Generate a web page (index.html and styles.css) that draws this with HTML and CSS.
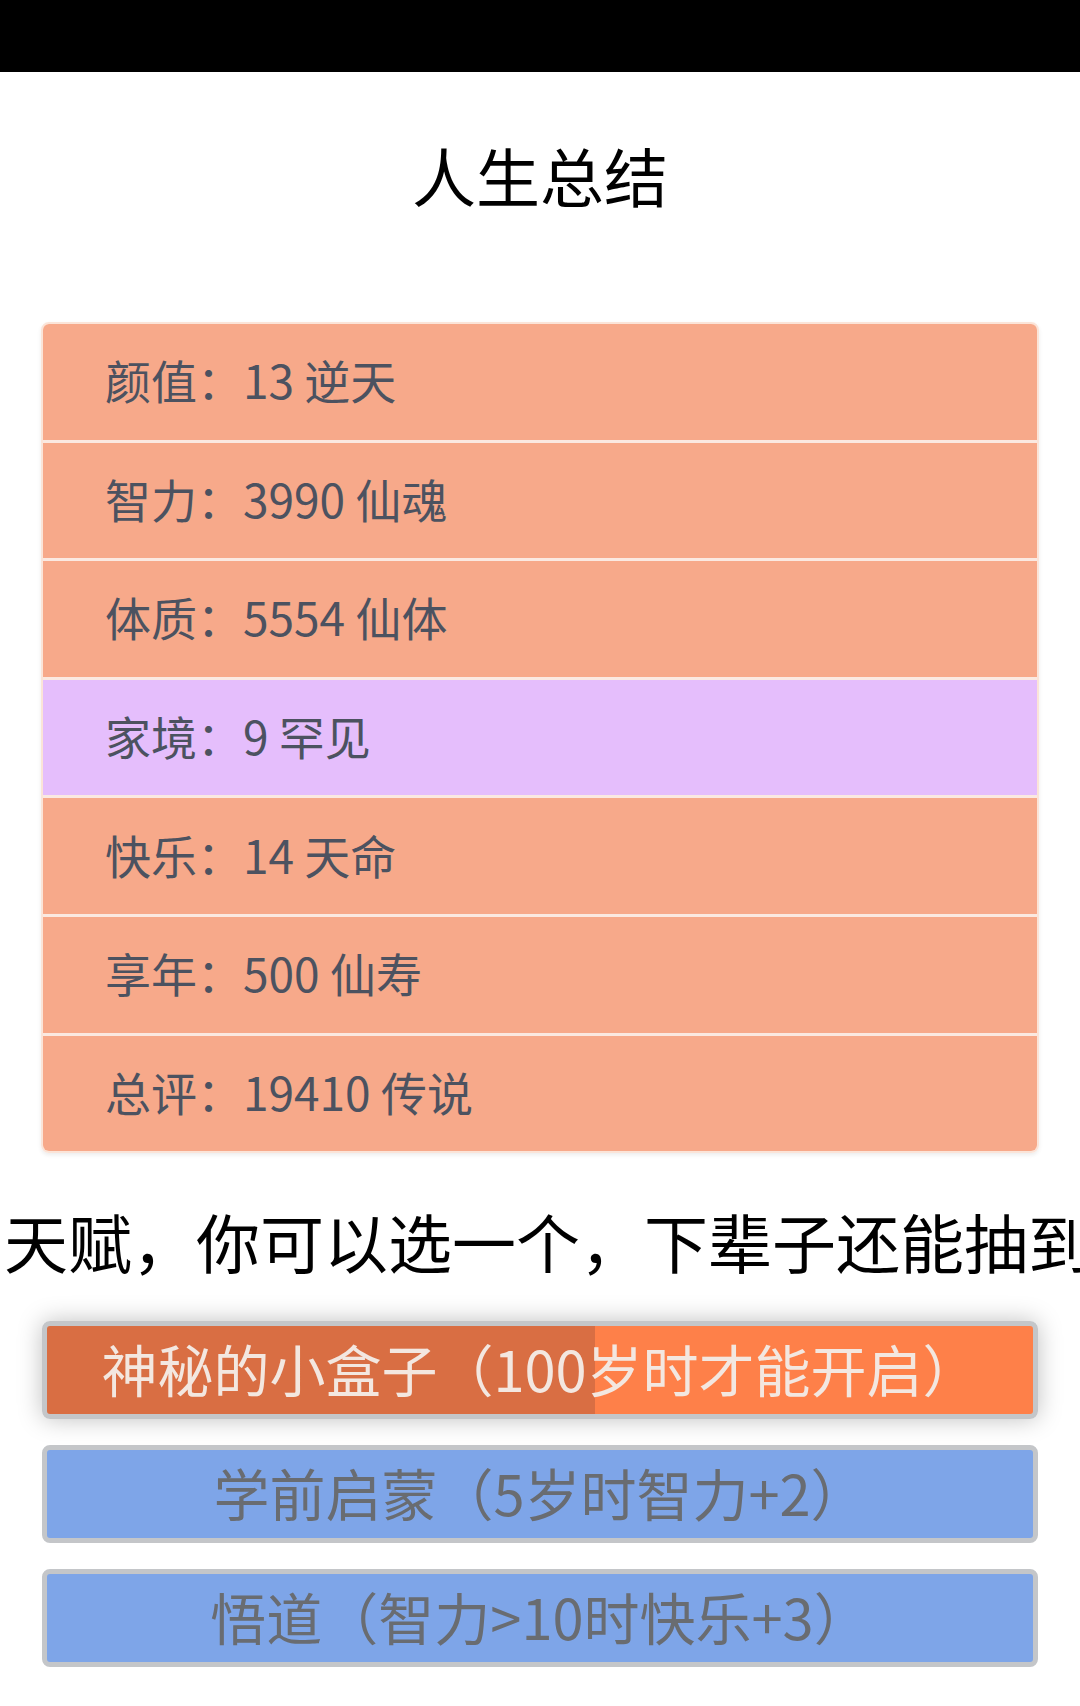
FILE: index.html
```html
<!DOCTYPE html>
<html lang="zh-CN">
<head>
  <meta charset="UTF-8">
  <title>人生总结</title>
  <link rel="stylesheet" href="styles.css">
</head>
<body>
  <div class="topbar"></div>

  <div class="page">
    <h1 class="title">人生总结</h1>

    <!-- summary table -->
    <ul class="summary">
      <li class="row">颜值：13 逆天</li>
      <li class="row">智力：3990 仙魂</li>
      <li class="row">体质：5554 仙体</li>
      <li class="row rare">家境：9 罕见</li>
      <li class="row">快乐：14 天命</li>
      <li class="row">享年：500 仙寿</li>
      <li class="row">总评：19410 传说</li>
    </ul>

    <div class="hint"><span>天赋，你可以选一个，下辈子还能抽到</span></div>

    <!-- talents -->
    <ul class="talents">
      <li class="talent legend selected">神秘的小盒子（100岁时才能开启）</li>
      <li class="talent">学前启蒙（5岁时智力+2）</li>
      <li class="talent">悟道（智力&gt;10时快乐+3）</li>
    </ul>
  </div>
</body>
</html>
```

FILE: styles.css
```css
/* Reset + base */
* { margin:0; padding:0; box-sizing:border-box; }
html, body { background:#fff; overflow:hidden; }
body {
  width:1080px;
  height:1706px;
  font-family:"Noto Sans CJK SC", "Noto Sans", sans-serif;
}

.topbar { height:72px; background:#000; }

.page { display:flex; flex-direction:column; }

/* Title */
.title {
  margin-top:70px;
  font-size:64px;
  line-height:64px;
  font-weight:400;
  text-align:center;
  color:#000;
}

/* Summary card */
.summary {
  list-style:none;
  margin:116px 41px 0;
  border:2px solid #fbe4d8;
  border-radius:8px;
  overflow:hidden;
  box-shadow:0 2px 4px rgba(0,0,0,0.08);
}
.row {
  height:118.6px;
  display:flex;
  align-items:center;
  padding:0 0 5px 62px;
  background:#f7a98a;
  border-bottom:3px solid #fbe9e1;
  font-size:46px;
  color:#4c5260;
}
.row:last-child { border-bottom:none; height:115px; }
.row.rare { background:#e5befc; }

/* Hint line, runs past the right edge */
.hint {
  margin-top:55px;
  padding-left:4px;
  display:flex;
  white-space:nowrap;
  font-size:64px;
  line-height:64px;
  color:#000;
}
.hint span { flex:none; }

/* Talent buttons */
.talents {
  list-style:none;
  margin:49px 42px 0;
  display:flex;
  flex-direction:column;
  gap:26px;
}
.talent {
  height:98px;
  border:5px solid #c4c6c9;
  border-radius:8px;
  background:#7ea5e8;
  display:flex;
  align-items:center;
  justify-content:center;
  padding-bottom:4px;
  white-space:nowrap;
  font-size:56px;
  color:#696c71;
}
.talent.legend {
  background:linear-gradient(to right, #d96e43 0, #d96e43 55.6%, #fe8049 55.6%, #fe8049 100%);
  color:#f3e7e0;
}
.talent.selected { box-shadow:0 0 24px rgba(0,0,0,0.25); }
```
